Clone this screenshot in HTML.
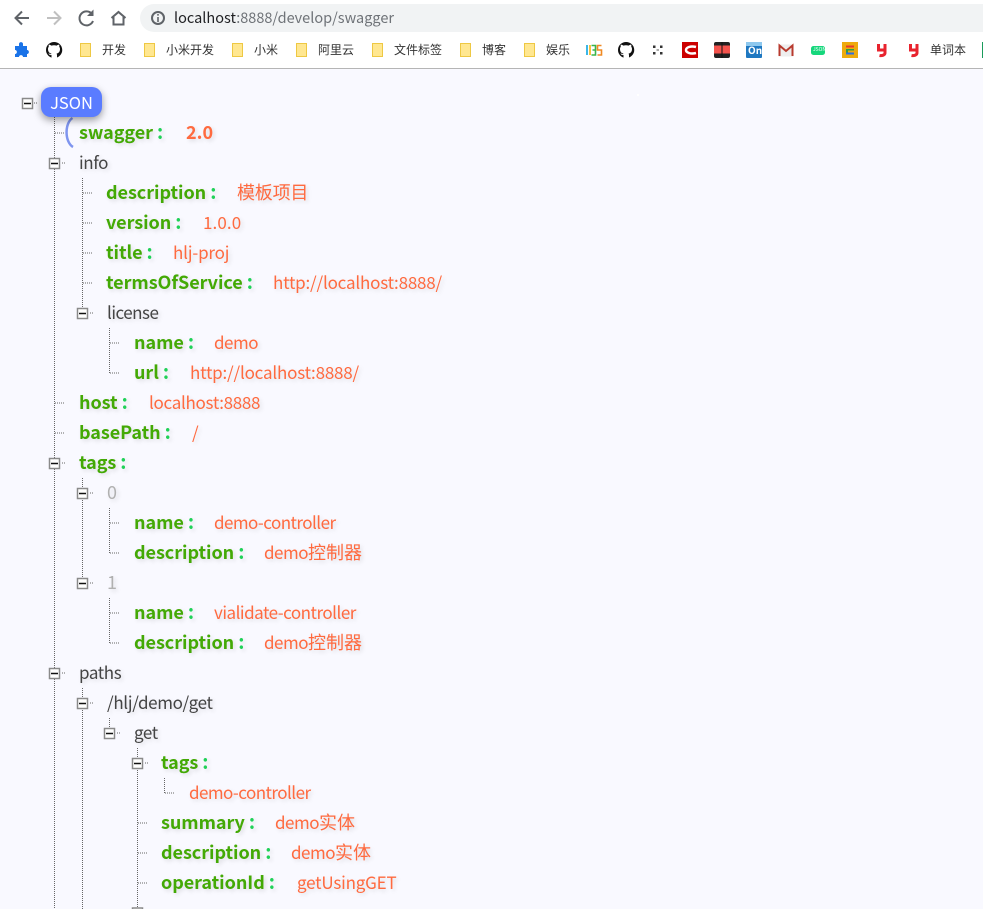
<!DOCTYPE html>
<html><head><meta charset="utf-8"><style>
html,body{margin:0;padding:0;width:983px;height:909px;overflow:hidden;background:#fff}
body{position:relative;font-family:"Noto Sans CJK SC","Liberation Sans",sans-serif}
#page{position:absolute;left:0;top:69px;width:983px;height:840px;background:#f9f9ff}
#rule{position:absolute;left:0;top:68px;width:983px;height:1px;background:#b5b5b5}
#url{position:absolute;left:140px;top:4px;width:860px;height:28px;border-radius:14px;background:#f1f3f4}
.u{position:absolute;left:174px;top:4px;line-height:28px;font-size:14.5px;color:#6f7378;white-space:nowrap}
.u b{font-weight:400;color:#202124}
.bm{position:absolute;top:40px;line-height:20px;font-size:12px;color:#333;white-space:nowrap}
svg{position:absolute;left:0;top:0}
.r{position:absolute;margin-top:-1px;line-height:30px;height:30px;font-size:18px;white-space:nowrap;text-shadow:2px 2px 4px rgba(0,0,0,.12)}
.k{font-weight:700;color:#43a905;letter-spacing:-.05px}
.k span{color:#1fd157;font-size:19px;line-height:0}
.v{color:#ff6a3f;font-size:17px;left:-.5px}
.v span{font-size:18px;letter-spacing:0;line-height:0}
.p{color:#444;font-size:17px;letter-spacing:-.4px}
.n{color:#b0b0b0}
#json{position:absolute;left:41px;top:87px;width:61px;height:30px;border-radius:10px;background:#5a7cff;box-shadow:0 3px 8px rgba(0,0,0,.4);color:#fff;font-size:16.500px;line-height:30px;text-align:center}
</style></head><body>
<div id="url"></div>
<div class="u"><b>localhost</b>:8888/develop/swagger</div>
<div id="rule"></div>
<div id="page"></div>

<svg width="983" height="69" viewBox="0 0 983 69">
<g fill="none" stroke="#5f6368" stroke-width="2">
<path d="M29 18H16M22 11.500L15.500 18L22 24.500"/>
<path d="M47 18H60M54 11.500L60.500 18L54 24.500" stroke="#c0c0c0"/>
<path d="M92 14A7 7 0 1 0 93 21"/>
<path d="M111.500 18L118.500 12L125.500 18M113.500 17V24.500H123.500V17" stroke-width="2"/>
<circle cx="158" cy="18" r="6"/>
</g>
<path d="M93.500 9.500V16H87Z" fill="#5f6368"/>
<path d="M157.200 17H158.800V22H157.200ZM157.200 14H158.800V15.600H157.200Z" fill="#5f6368"/>
<path d="M15 46H19V44C19 41.500 23 41.500 23 44V46H27V50C29.500 50 29.500 54 27 54V57H23C23 54.500 19 54.500 19 57H15V54C17.500 54 17.500 50 15 50Z" fill="#1a73e8"/>
<path d="M54 42A8 8 0 0 0 51.500 57.600V55C49.300 55.500 48.800 54 48.500 53.300C50 53.800 50.800 54.800 51.500 53.700C49.500 53 48 52 48 49C48 48 48.400 47.300 48.800 46.800C48.600 46.200 48.600 45.300 48.900 44.600C49.800 44.600 50.700 45.100 51.400 45.600C53 45.200 55 45.200 56.600 45.600C57.300 45.100 58.200 44.600 59.100 44.600C59.400 45.300 59.400 46.200 59.200 46.800C59.600 47.300 60 48 60 49C60 52 58.500 53 56.500 53.700C57 54.200 57 55 57 55.500V57.500A8 8 0 0 0 54 42Z" fill="#111"/>
<path d="M626 42A8 8 0 0 0 623.500 57.600V55C621.300 55.500 620.800 54 620.500 53.300C622 53.800 622.800 54.800 623.500 53.700C621.500 53 620 52 620 49C620 48 620.400 47.300 620.800 46.800C620.600 46.200 620.600 45.300 620.900 44.600C621.800 44.600 622.700 45.100 623.400 45.600C625 45.200 627 45.200 628.600 45.600C629.300 45.100 630.200 44.600 631.100 44.600C631.400 45.300 631.400 46.200 631.200 46.800C631.600 47.300 632 48 632 49C632 52 630.500 53 628.500 53.700C629 54.200 629 55 629 55.500V57.500A8 8 0 0 0 626 42Z" fill="#111"/>
<g fill="#ffe791" stroke="#eec843" stroke-width="1">
<path d="M80.500 43.500H90.500V56.500H80.500Z"/><path d="M144.500 43.500H154.500V56.500H144.500Z"/><path d="M232.500 43.500H242.500V56.500H232.500Z"/><path d="M296.500 43.500H306.500V56.500H296.500Z"/><path d="M372.500 43.500H382.500V56.500H372.500Z"/><path d="M460.500 43.500H470.500V56.500H460.500Z"/><path d="M524.500 43.500H534.500V56.500H524.500Z"/>
</g>
<rect x="586" y="45" width="2" height="10" fill="#3bb8e8"/><rect x="589" y="45" width="2" height="10" fill="#f6c23c"/>
<path d="M591.500 45.500H595.500V55H591.500M592.500 50H595.500" fill="none" stroke="#39b54a" stroke-width="1.600"/>
<path d="M601.500 45.500H597.500V50H601.500V55H597.500" fill="none" stroke="#f08a24" stroke-width="1.600"/>
<g fill="#333"><rect x="653" y="45.500" width="2.500" height="2.500"/><rect x="660" y="45.500" width="2.500" height="2.500"/><rect x="653" y="52" width="2.500" height="2.500"/><rect x="660" y="52" width="2.500" height="2.500"/><rect x="656.500" y="49" width="2.500" height="2" fill="#aaa"/></g>
<rect x="682" y="42" width="16" height="16" fill="#cc0000"/>
<path d="M696 47C690.500 45.500 686 47.500 686 50C686 52.500 690.500 54.500 696 53" fill="none" stroke="#fff" stroke-width="2.500"/>
<rect x="714" y="42" width="16" height="16" rx="2" fill="#222"/>
<rect x="714" y="45.500" width="16" height="8" fill="#f4534d"/><rect x="721.500" y="42" width="1" height="16" fill="#111"/>
<rect x="746" y="42" width="16" height="16" rx="1" fill="#1f78c1"/>
<rect x="746" y="42" width="16" height="4" fill="#8ec8ee"/>
<path d="M778.500 44.500H793.500V56.500H778.500Z" fill="#eee"/>
<path d="M779.500 56V45.500L786 51L792.500 45.500V56" fill="none" stroke="#b83a2e" stroke-width="2"/>
<rect x="811" y="46" width="14" height="9" rx="2.500" fill="#16d77c"/>
<rect x="842" y="42" width="16" height="16" fill="#eeab0d"/>
<rect x="846" y="45.500" width="8" height="2" fill="#e8392e"/><rect x="846" y="49" width="2" height="5" fill="#2f9e44"/><rect x="848" y="49" width="6" height="1.500" fill="#2f9e44"/><rect x="846" y="52.500" width="8" height="2" fill="#2e6fe0"/>
<path d="M878.500 44V50H884.500M885 44V53C885 55 882 56 879.500 55.500" fill="none" stroke="#e8232e" stroke-width="3"/>
<path d="M910.500 44V50H916.500M917 44V53C917 55 914 56 911.500 55.500" fill="none" stroke="#e8232e" stroke-width="3"/>
<rect x="982" y="42" width="1" height="16" fill="#1a9b5b"/>
</svg>
<div class="bm" style="left:102px">开发</div>
<div class="bm" style="left:166px">小米开发</div>
<div class="bm" style="left:254px">小米</div>
<div class="bm" style="left:318px">阿里云</div>
<div class="bm" style="left:394px">文件标签</div>
<div class="bm" style="left:482px">博客</div>
<div class="bm" style="left:546px">娱乐</div>
<div class="bm" style="left:930px">单词本</div>
<div class="bm" style="left:748px;top:40px;font-size:10px;font-weight:700;color:#fff">On</div>
<div class="bm" style="left:813px;top:40px;font-size:5px;color:#fff">JSON</div>

<svg width="983" height="909" viewBox="0 0 983 909">
<g fill="none" stroke="#666" stroke-width="1" stroke-dasharray="1 1">
<path d="M54.500 117V909M82.500 178V313M109.500 328V373M82.500 478V583M109.500 508V553M109.500 598V643M82.500 688V909M109.500 718V728M137.500 748V909M164.500 778V793"/>
<path d="M34 103H38M55 133H65M62 163H66M83 193H93M83 223H93M83 253H93M83 283H93M90 313H94M110 343H120M110 373H120M55 403H65M55 433H65M62 463H66M90 493H94M110 523H120M110 553H120M90 583H94M110 613H120M110 643H120M62 673H66M90 703H94M117 733H121M145 763H149M165 793H175M138 823H148M138 853H148M138 883H148"/>
</g>
<path d="M72.500 118C64.500 123 64.500 142 73 147" fill="none" stroke="#7f95ef" stroke-width="2.500"/>
<g fill="#fff" stroke="#8a8a8a" stroke-width="1.500">
<rect x="22.500" y="98.500" width="10" height="10"/><rect x="49.500" y="158.500" width="10" height="10"/><rect x="77.500" y="308.500" width="10" height="10"/><rect x="49.500" y="458.500" width="10" height="10"/><rect x="77.500" y="488.500" width="10" height="10"/><rect x="77.500" y="578.500" width="10" height="10"/><rect x="49.500" y="668.500" width="10" height="10"/><rect x="77.500" y="698.500" width="10" height="10"/><rect x="104.500" y="728.500" width="10" height="10"/><rect x="132.500" y="758.500" width="10" height="10"/><rect x="132.500" y="908" width="10" height="10"/>
</g>
<path d="M24 103.500H31M51 163.500H58M79 313.500H86M51 463.500H58M79 493.500H86M79 583.500H86M51 673.500H58M79 703.500H86M106 733.500H113M134 763.500H141" stroke="#111" stroke-width="1.500"/>
<rect x="637" y="94" width="2" height="2" fill="#fff"/>
</svg>

<div id="json">JSON</div>

<div class="r k" style="left:79px;top:118px">swagger&nbsp;<span>:</span></div><div class="r v" style="left:186px;top:118px;font-weight:700;font-size:18px">2.0</div>
<div class="r p" style="left:79px;top:148px">info</div>
<div class="r k" style="left:106px;top:178px">description <span>:</span></div><div class="r v" style="left:237px;top:178px"><span style="letter-spacing:-.2px">模板项目</span></div>
<div class="r k" style="left:106px;top:208px">version <span>:</span></div><div class="r v" style="left:203px;top:208px;letter-spacing:.1px">1.0.0</div>
<div class="r k" style="left:106px;top:238px">title <span>:</span></div><div class="r v" style="left:173px;top:238px;letter-spacing:-.2px">hlj-proj</div>
<div class="r k" style="left:106px;top:268px">termsOfService <span>:</span></div><div class="r v" style="left:273px;top:268px;letter-spacing:-.2px">http://localhost:8888/</div>
<div class="r p" style="left:107px;top:298px;letter-spacing:-.5px">license</div>
<div class="r k" style="left:134px;top:328px">name <span>:</span></div><div class="r v" style="left:214px;top:328px;letter-spacing:-.5px">demo</div>
<div class="r k" style="left:134px;top:358px">url <span>:</span></div><div class="r v" style="left:190px;top:358px;letter-spacing:-.2px">http://localhost:8888/</div>
<div class="r k" style="left:79px;top:388px">host <span>:</span></div><div class="r v" style="left:149px;top:388px;letter-spacing:-.3px">localhost:8888</div>
<div class="r k" style="left:79px;top:418px">basePath <span>:</span></div><div class="r v" style="left:192px;top:418px">/</div>
<div class="r k" style="left:79px;top:448px">tags&nbsp;<span>:</span></div>
<div class="r n" style="left:107px;top:478px">0</div>
<div class="r k" style="left:134px;top:508px">name <span>:</span></div><div class="r v" style="left:214px;top:508px;letter-spacing:-.55px">demo-controller</div>
<div class="r k" style="left:134px;top:538px">description <span>:</span></div><div class="r v" style="left:264px;top:538px;letter-spacing:-.5px">demo<span>控制器</span></div>
<div class="r n" style="left:107px;top:568px">1</div>
<div class="r k" style="left:134px;top:598px">name <span>:</span></div><div class="r v" style="left:214px;top:598px;letter-spacing:-.5px">vialidate-controller</div>
<div class="r k" style="left:134px;top:628px">description <span>:</span></div><div class="r v" style="left:264px;top:628px;letter-spacing:-.5px">demo<span>控制器</span></div>
<div class="r p" style="left:79px;top:658px">paths</div>
<div class="r p" style="left:107px;top:688px;letter-spacing:-.35px">/hlj/demo/get</div>
<div class="r p" style="left:134px;top:718px">get</div>
<div class="r k" style="left:161px;top:748px">tags&nbsp;<span>:</span></div>
<div class="r v" style="left:189px;top:778px;letter-spacing:-.55px">demo-controller</div>
<div class="r k" style="left:161px;top:808px">summary <span>:</span></div><div class="r v" style="left:275px;top:808px;letter-spacing:-.5px">demo<span>实体</span></div>
<div class="r k" style="left:161px;top:838px">description <span>:</span></div><div class="r v" style="left:291px;top:838px;letter-spacing:-.5px">demo<span>实体</span></div>
<div class="r k" style="left:161px;top:868px">operationId&nbsp;<span>:</span></div><div class="r v" style="left:297px;top:868px;letter-spacing:-.2px">getUsingGET</div>
</body></html>
